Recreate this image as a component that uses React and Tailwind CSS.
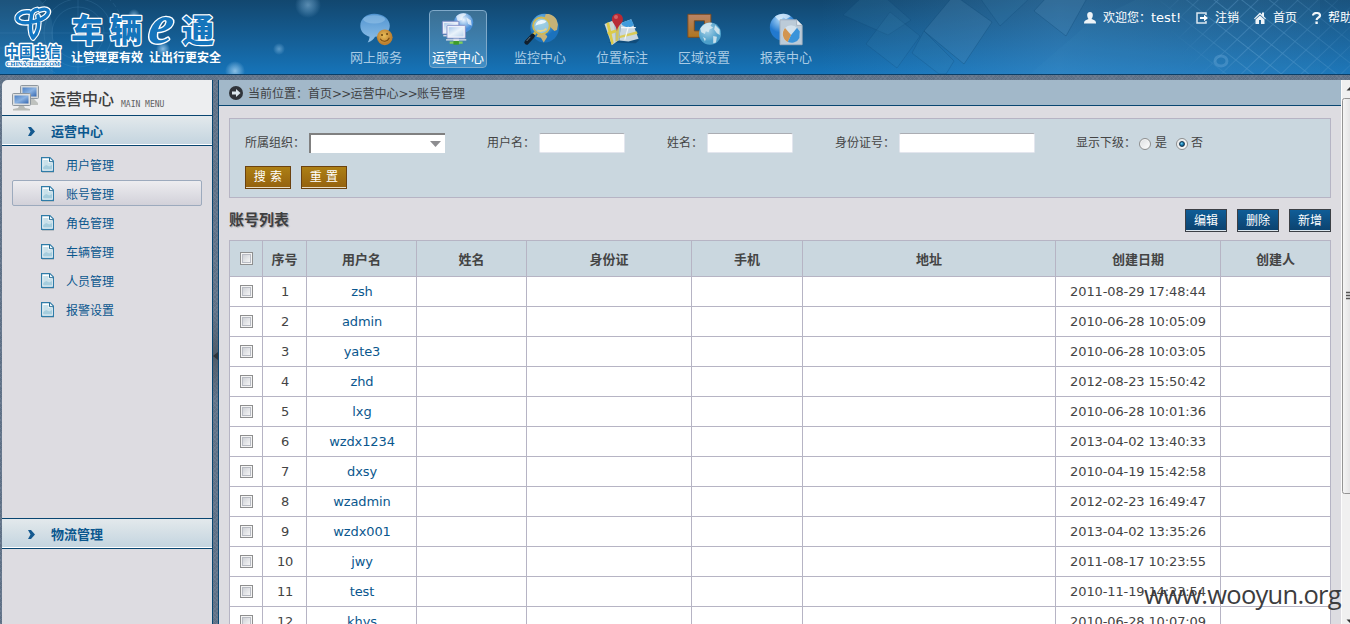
import React from "react";

const users = [
  ["zsh", "2011-08-29 17:48:44"],
  ["admin", "2010-06-28 10:05:09"],
  ["yate3", "2010-06-28 10:03:05"],
  ["zhd", "2012-08-23 15:50:42"],
  ["lxg", "2010-06-28 10:01:36"],
  ["wzdx1234", "2013-04-02 13:40:33"],
  ["dxsy", "2010-04-19 15:42:58"],
  ["wzadmin", "2012-02-23 16:49:47"],
  ["wzdx001", "2013-04-02 13:35:26"],
  ["jwy", "2011-08-17 10:23:55"],
  ["test", "2010-11-19 14:23:54"],
  ["khys", "2010-06-28 10:07:09"],
];

const GRID = "grid grid-cols-[33px_44px_110px_110px_165px_111px_253px_165px_110px]";
const TEXTURE =
  "bg-[#5e7085] bg-[repeating-linear-gradient(45deg,#76859a66_0_1px,transparent_1px_3px),repeating-linear-gradient(-45deg,#76859a66_0_1px,transparent_1px_3px)]";

function ChatIcon() {
  return (
    <svg width="38" height="38" viewBox="0 0 38 38">
      <defs>
        <linearGradient id="chat" x1="0" y1="0" x2="0" y2="1">
          <stop offset="0" stopColor="#4f93d0" />
          <stop offset="1" stopColor="#8fc0e8" />
        </linearGradient>
        <radialGradient id="smile" cx=".45" cy=".4">
          <stop offset="0" stopColor="#e8bd58" />
          <stop offset="1" stopColor="#bd8030" />
        </radialGradient>
      </defs>
      <path d="M17 2C8 2 2 7.500 2 15c0 6 4 10 10 12-.3 3-1 4.500-2 6 4-1 6-3 8-6 9-.5 16-5 16-12S27 2 17 2z" fill="url(#chat)" />
      <ellipse cx="17" cy="8" rx="12" ry="4.500" fill="#b8daf4" opacity=".35" />
      <circle cx="28.500" cy="27.500" r="8.500" fill="url(#smile)" />
      <circle cx="25.500" cy="25" r="1.100" fill="#6a4410" />
      <circle cx="31" cy="24" r="1.100" fill="#6a4410" />
      <path d="M23.500 29c2.500 4 8 3.500 10-1" stroke="#7b4c11" strokeWidth="1.200" fill="none" />
    </svg>
  );
}

function OperateIcon() {
  return (
    <svg width="38" height="38" viewBox="0 0 38 38">
      <defs>
        <linearGradient id="scr" x1="0" y1="0" x2="1" y2="1">
          <stop offset="0" stopColor="#a9c8ea" />
          <stop offset=".5" stopColor="#eaf3fb" />
          <stop offset="1" stopColor="#b8d2ec" />
        </linearGradient>
        <radialGradient id="gl1" cx=".5" cy=".35">
          <stop offset="0" stopColor="#eaf5ff" />
          <stop offset="1" stopColor="#4a8fd8" />
        </radialGradient>
      </defs>
      <circle cx="25" cy="11.500" r="10.500" fill="url(#gl1)" />
      <path d="M17 5c3-4 9-4 11-3-1 3-4 2-4 5s-4 1-5 4M28 6l5 3 1 6-4-2z" fill="#fff" opacity=".65" />
      <rect x="2" y="10" width="18" height="14" rx="1" fill="#e9edf8" stroke="#7383c0" />
      <rect x="4" y="12" width="14" height="10" fill="url(#scr)" />
      <path d="M3 25h5v1.500H3z" fill="#cfd6e6" />
      <rect x="7" y="14.500" width="20" height="14" rx="1" fill="#eef1fa" stroke="#8290c8" />
      <rect x="9" y="16.500" width="16" height="10" fill="url(#scr)" />
      <path d="M14 29h6v3h-6z" fill="#dfe4ee" />
      <path d="M6 29.500h22V31H6z" fill="#d6dcea" />
      <path d="M10 32h14v2.500H10z" fill="#7fd05a" />
      <path d="M14 31.500h6v4h-6z" fill="#3f9c2c" />
    </svg>
  );
}

function MonitorIcon() {
  return (
    <svg width="38" height="38" viewBox="0 0 38 38">
      <defs>
        <radialGradient id="gl2" cx=".4" cy=".3">
          <stop offset="0" stopColor="#8ccaf3" />
          <stop offset="1" stopColor="#1b72bd" />
        </radialGradient>
      </defs>
      <circle cx="24" cy="17.500" r="15.500" fill="url(#gl2)" />
      <path d="M25 2.500c5-1 10 2 12 6l1.500 5-1 6-3 1-4-4-3-5-4-3zM17 23c5-1 9 1 10 4l-4 6-3-5-5-1z" fill="#c6b277" />
      <circle cx="20.500" cy="15" r="9" fill="#a5d2e2" fillOpacity=".8" stroke="#d2b951" strokeWidth="2" />
      <path d="M14 15c1-6 7-8 12-5-3 4-7 2-12 5z" fill="#f4fbff" opacity=".9" />
      <path d="M16 20c3 1 7 1 10-2" stroke="#e8d48a" strokeWidth="2" fill="none" />
      <path d="M14 22.500l-4 4" stroke="#d8bb48" strokeWidth="3" />
      <path d="M11 26l-6.500 7" stroke="#111f2c" strokeWidth="5" strokeLinecap="round" />
      <path d="M8.500 27l-4 4.500" stroke="#69808e" strokeWidth="1" />
    </svg>
  );
}

function MapIcon() {
  return (
    <svg width="40" height="38" viewBox="0 0 40 38">
      <path d="M5 33l30 1 4-4-20-3z" fill="#0a3558" opacity=".45" />
      <path d="M1 13l10-4 5 22-7 5z" fill="#cdd6d3" />
      <path d="M11 9l8 4-2 18-4 1z" fill="#a9bfce" />
      <path d="M19 12l11-4 8 21-11 3-10-1z" fill="#cbd8e0" />
      <path d="M19 12l11-4 3 6c-5 4-10 2-13 0z" fill="#3f9bdc" />
      <path d="M6 11l5 23-2.500 1.500L3 12z" fill="#dccb49" />
      <path d="M4 22l9-3 1 3-9 3z" fill="#dccb49" />
      <path d="M14 14h3l-1 17-3 1z" fill="#d2c254" opacity=".9" />
      <path d="M17 26l19-5 1 2.500-20 5z" fill="#dccb49" opacity=".9" />
      <path d="M19 17l16 0M23 30l4-14" stroke="#f4f8fa" strokeWidth="1.200" />
      <path d="M15 1.500a6 6 0 0 0-6 6.500c0 4 5 6.500 5.500 13 .7-6.500 7-9 6.500-13a6 6 0 0 0-6-6.500z" fill="#b82a35" />
      <circle cx="13.500" cy="5.500" r="2.200" fill="#e0797a" opacity=".7" />
    </svg>
  );
}

function AreaIcon() {
  return (
    <svg width="40" height="38" viewBox="0 0 40 38">
      <defs>
        <linearGradient id="frame" x1="0" y1="0" x2="0" y2="1">
          <stop offset="0" stopColor="#b98467" />
          <stop offset="1" stopColor="#b0761f" />
        </linearGradient>
        <radialGradient id="gl3" cx=".4" cy=".35">
          <stop offset="0" stopColor="#a9d3e8" />
          <stop offset="1" stopColor="#4d9fca" />
        </radialGradient>
      </defs>
      <path d="M2.500 2.500h25v25h-25zM9.500 9.500v11h11v-11z" fillRule="evenodd" fill="url(#frame)" stroke="#7c4a1d" />
      <circle cx="26.500" cy="23.500" r="12" fill="url(#gl3)" />
      <path d="M16 18c3-5 8-7 13-6l-2 3 3 2-4 2-1 3-3-1-1 3-4-2zM30 26l4 1-1 6-3 1zM19 27l3 2-1 3zM32 14l5 5 0 6-3-2-3-4z" fill="#dcebf1" opacity=".85" />
    </svg>
  );
}

function ReportIcon() {
  return (
    <svg width="40" height="38" viewBox="0 0 40 38">
      <defs>
        <radialGradient id="gl4" cx=".4" cy=".2">
          <stop offset="0" stopColor="#b3dcfb" />
          <stop offset="1" stopColor="#2279cf" />
        </radialGradient>
      </defs>
      <circle cx="17" cy="16.500" r="14.500" fill="url(#gl4)" />
      <path d="M8 5c6-4 13-4 17 0l-5 3-3-2-4 4-3-3z" fill="#e0f0fc" opacity=".7" />
      <path d="M13.500 8.500h18l6 6v21h-24z" fill="#bccbd8" stroke="#a3b1bf" />
      <path d="M31.500 8.500v6h6" fill="#e6edf2" stroke="#a3b1bf" />
      <circle cx="25.500" cy="24" r="9.500" fill="#d3e1ec" />
      <path d="M25.500 25l-6.500-7.500a9.500 9.500 0 0 0 3 15z" fill="#d29550" />
      <path d="M25.500 25l-3.500 7.600a9.500 9.500 0 0 0 12.500-4.500l.5-7L32 17z" fill="#3b94da" />
    </svg>
  );
}

const modules = [
  ["网上服务", ChatIcon],
  ["运营中心", OperateIcon],
  ["监控中心", MonitorIcon],
  ["位置标注", MapIcon],
  ["区域设置", AreaIcon],
  ["报表中心", ReportIcon],
];

function HeaderArt() {
  return (
    <svg className="absolute inset-0" width="1350" height="74" viewBox="0 0 1350 74">
      <defs>
        <linearGradient id="sheen" x1="0" x2="1" y1="0" y2="0">
          <stop offset="0" stopColor="#4f9bd4" stopOpacity="0" />
          <stop offset=".45" stopColor="#58a0d8" stopOpacity=".33" />
          <stop offset="1" stopColor="#3a83bb" stopOpacity=".2" />
        </linearGradient>
        <radialGradient id="dot">
          <stop offset="0" stopColor="#9fcdee" stopOpacity=".85" />
          <stop offset=".5" stopColor="#8cc0e6" stopOpacity=".5" />
          <stop offset="1" stopColor="#8cc0e6" stopOpacity="0" />
        </radialGradient>
        <pattern id="mesh" width="14" height="17" patternUnits="userSpaceOnUse" patternTransform="rotate(38) skewX(-8)">
          <path d="M0 0h14M0 0v17" stroke="#70acd8" strokeOpacity=".5" strokeWidth="1.300" />
        </pattern>
        <linearGradient id="fade" x1="0" x2="1" y1=".2" y2="0">
          <stop offset="0" stopColor="#000" />
          <stop offset=".35" stopColor="#fff" />
          <stop offset=".7" stopColor="#aaa" />
          <stop offset="1" stopColor="#333" />
        </linearGradient>
        <mask id="meshmask">
          <rect x="1160" width="190" height="74" fill="url(#fade)" />
        </mask>
      </defs>
      <rect x="820" width="530" height="74" fill="url(#sheen)" />
      <g fill="none" stroke="#6ba7d2" strokeOpacity=".16">
        <circle cx="78" cy="33" r="26" />
        <circle cx="78" cy="33" r="34" />
        <circle cx="78" cy="33" r="46" strokeDasharray="5 3" />
        <path d="M0 33h130M78 0v74M0 48h60" />
      </g>
      <path d="M0 0h40c8 8 13 18 13 32v42H0z" fill="#5b95bf" opacity=".17" />
      <g fill="#4384b1" fillOpacity=".14" stroke="#0c4672" strokeOpacity=".22">
        <path d="M843 15l30-28 38 33-23 15z" />
        <path d="M866 44l24-32 30 24-23 32z" />
        <path d="M912 53l12-22 30 30-8 13h-7z" />
        <path d="M980-2h50l-30 28z" />
      </g>
      <g fill="#5a92ba" fillOpacity=".2" stroke="#0c4672" strokeOpacity=".3">
        <path d="M924 31l30-36 38 27-28 42z" />
        <path d="M1034 11l12-13 40-3v5l-20 36z" />
      </g>
      <path d="M1135 0l-45 22-60 52h290V0z" fill="#65a8d9" opacity=".05" />
      <rect x="1160" width="190" height="74" fill="url(#mesh)" mask="url(#meshmask)" />
      <ellipse cx="1221" cy="61" rx="6" ry="5" fill="none" stroke="#69a8d6" strokeWidth="3" opacity=".4" />
      <circle cx="308" cy="5" r="13" fill="url(#dot)" opacity=".6" />
      <circle cx="279" cy="49" r="6" fill="url(#dot)" opacity=".6" />
      <circle cx="235" cy="71" r="10" fill="url(#dot)" />
      <circle cx="163" cy="49" r="7" fill="url(#dot)" />
      <circle cx="134" cy="15" r="6" fill="url(#dot)" opacity=".7" />
    </svg>
  );
}

function Brand() {
  const cjk = "'Noto Sans CJK SC', sans-serif";
  const ring = "M29 12C20 11 15 17 18 20.500C22 25 38 22 45 17C52 11 47 7.500 40 10";
  const stem = "M37 9.500C34 10 32 12 31.500 15C30.500 24 29 32 33 38C38 33 40 26 38 16";
  return (
    <svg className="relative shrink-0" width="240" height="74" viewBox="0 0 240 74">
      <g fill="none" strokeLinecap="round" strokeLinejoin="round">
        <path d={ring + stem} stroke="#fff" strokeWidth="5.800" />
        <path d={ring + stem} stroke="#1276c2" strokeWidth="3.400" />
      </g>
      <g fill="#1474bb" stroke="#fff" paintOrder="stroke" strokeLinejoin="round">
        <text x="5" y="56.500" fontSize="15" fontWeight="700" fontFamily={cjk} strokeWidth="3" textLength="56" lengthAdjust="spacingAndGlyphs">中国电信</text>
        <text x="6" y="65.500" fontSize="7" fontWeight="700" fontFamily="'Liberation Serif', serif" strokeWidth="2.400" textLength="54" lengthAdjust="spacingAndGlyphs">CHINA TELECOM</text>
        <g fontSize="32" fontWeight="900" fontFamily={cjk} strokeWidth="2.600">
          <text x="71" y="42">车</text>
          <text x="110" y="42">辆</text>
          <text x="182" y="42">通</text>
        </g>
        <text transform="translate(147 43) skewX(-8)" fontSize="55" fontWeight="700" fontFamily="'Liberation Serif', serif" fontStyle="italic" strokeWidth="2.800">e</text>
      </g>
      <g fill="#fff" fontSize="12" fontWeight="700" fontFamily={cjk}>
        <text x="71" y="62" textLength="72">让管理更有效</text>
        <text x="149" y="62" textLength="72">让出行更安全</text>
      </g>
    </svg>
  );
}

function PageIcon() {
  return (
    <svg width="13" height="16" viewBox="0 0 13 16">
      <path d="M.6.600h8.300l3.500 3.500v10.300H.6z" fill="#fff" stroke="#2f7ca8" strokeWidth="1.200" />
      <path d="M2.200 3h5.300v3h3.500v6.500H2.200z" fill="#c9e1ea" />
      <path d="M2.200 10l3-2 3 1.500 2.800-1.500v4.500H2.200z" fill="#a5cddd" />
      <path d="M8.500 1v3.700h3.700" fill="#eef8fb" stroke="#276b92" />
      <path d="M1 15.500h12" stroke="#aeb6bd" strokeWidth=".8" />
    </svg>
  );
}

function Section({ label }) {
  return (
    <div className="flex h-[31px] shrink-0 items-center border-y border-[#094671] bg-gradient-to-b from-[#e3e9ec] to-[#c3d4df] shadow-[inset_0_-1px_0_#fff]">
      <svg className="mt-[2px] ml-[26px]" width="7" height="9" viewBox="0 0 7 9">
        <path d="M0 0h3l4 4.500L3 9H0l2.500-4.500z" fill="#14598f" />
      </svg>
      <span className="ml-[16px] pt-[3px] text-[13px] leading-[18px] font-bold text-[#0a578e]">{label}</span>
    </div>
  );
}

function Sidebar() {
  const items = ["用户管理", "账号管理", "角色管理", "车辆管理", "人员管理", "报警设置"];
  return (
    <aside className="ml-[2px] flex w-[211px] shrink-0 flex-col rounded-tl-md border-r border-[#094671] bg-[#dddce1]">
      <div className="flex h-[35px] shrink-0 items-center rounded-tl-md bg-[#edeef0]">
        <svg className="ml-[9px]" width="29" height="26" viewBox="0 0 29 26">
          <defs>
            <linearGradient id="pc" x1="0" y1="0" x2="1" y2="1">
              <stop offset="0" stopColor="#4d80c4" />
              <stop offset=".5" stopColor="#8ab2e2" />
              <stop offset="1" stopColor="#3567b0" />
            </linearGradient>
          </defs>
          <rect x="9.500" y=".5" width="18" height="13" rx="1" fill="#d5d7d8" stroke="#8e979f" />
          <rect x="11.500" y="2.500" width="14" height="9" fill="url(#pc)" />
          <path d="M18 14h5l4 4v2H17z" fill="#bfc2bf" />
          <rect x="1.500" y="8.500" width="18" height="12" rx="1" fill="#dedfdf" stroke="#8e979f" />
          <rect x="3.500" y="10.500" width="14" height="8" fill="url(#pc)" />
          <path d="M8 21h5l1 2 5 1v1.500H2V24l5-1z" fill="#b7bab6" />
        </svg>
        <span className="ml-[10px] pt-[5px] text-[16px] leading-[22px] font-medium text-[#3f3f40]">运营中心</span>
        <span className="ml-[7px] pt-[13px] font-['DejaVu_Sans_Mono',monospace] text-[8px] leading-[9px] text-[#5f5f62]">MAIN MENU</span>
      </div>
      <Section label="运营中心" />
      <nav className="flex h-[372px] shrink-0 flex-col gap-[3px] px-[10px] pt-[5px] text-[12px] text-[#0a578e]">
        {items.map((label, i) => (
          <a
            key={label}
            className={
              i === 1
                ? "flex h-[26px] items-center gap-[12px] rounded-[2px] border border-[#9caabd] bg-gradient-to-b from-[#ededf0] to-[#d2d1d9] pl-[28px]"
                : "flex h-[26px] items-center gap-[12px] border border-transparent pl-[28px]"
            }
          >
            <span className="pt-[2px]"><PageIcon /></span>
            <span className="pt-[4px] leading-[16px]">{label}</span>
          </a>
        ))}
      </nav>
      <Section label="物流管理" />
    </aside>
  );
}

function TextField({ label, className, width }) {
  return (
    <label className={"flex items-center gap-[4px] " + className}>
      <span>{label}</span>
      <span className={"block h-[20px] rounded-[2px] border border-[#e3e6ee] border-t-[#abadb3] bg-white " + width} />
    </label>
  );
}

function Check() {
  return (
    <span className="block h-[13px] w-[13px] border border-[#8e8f8f] bg-[#f4f4f4] p-[1px]">
      <span className="block h-[9px] w-[9px] border border-[#b9bcc4] bg-gradient-to-br from-[#cfd2d7] to-[#f6f6f6]" />
    </span>
  );
}

function Radio({ checked }) {
  return (
    <span className="flex h-[12px] w-[12px] items-center justify-center rounded-full border border-[#8e8f8f] bg-gradient-to-br from-[#dcdee0] to-white shadow-[inset_0_0_0_1px_#f4f4f4]">
      {checked && <span className="block h-[6px] w-[6px] rounded-full border border-[#12354e] bg-[radial-gradient(circle_at_40%_35%,#6fd0f0,#1478ad_50%,#0b405f)]" />}
    </span>
  );
}

function Cell({ children, className = "" }) {
  return <div className={"flex items-center justify-center border-r border-[#b6b4c4] " + className}>{children}</div>;
}

function Content() {
  const actions = ["编辑", "删除", "新增"];
  const heads = ["序号", "用户名", "姓名", "身份证", "手机", "地址", "创建日期", "创建人"];
  return (
    <main className="flex min-w-0 flex-1 flex-col overflow-hidden border-l border-[#094671] bg-[#dddce1]">
      <div className="flex h-[26px] shrink-0 items-center border-b border-[#094671] bg-[#a2b8c9] pl-[10px] text-[12px] text-[#3f4245]">
        <svg width="14" height="14" viewBox="0 0 14 14">
          <circle cx="7" cy="7" r="7" fill="#30343a" />
          <path d="M3 5.500h4V3l4.500 4L7 11V8.500H3z" fill="#dde7ee" />
        </svg>
        <span className="ml-[5px] pt-[2px] whitespace-nowrap">
          当前位置：首页<span className="tracking-[-0.800px]">&gt;&gt;</span>运营中心<span className="tracking-[-0.800px]">&gt;&gt;</span>账号管理
        </span>
      </div>
      <div className="flex min-h-0 flex-1 flex-col pt-[12px] pl-[10px]">
        <form className="h-[80px] w-[1102px] shrink-0 border border-[#b6b4c4] bg-[#cad7df] pt-[14px] pl-[15px] text-[12px] text-[#444]">
          <div className="flex h-[20px] items-center whitespace-nowrap">
            <label className="flex w-[200px] items-center gap-[4px]">
              <span>所属组织：</span>
              <span className="flex h-[20px] w-[136px] items-center justify-end border-t-2 border-l-2 border-[#808080] bg-white pr-[4px]">
                <svg width="11" height="6" viewBox="0 0 11 6">
                  <path d="M0 0h11L5.500 6z" fill="#8d8d90" />
                </svg>
              </span>
            </label>
            <TextField label="用户名：" className="ml-[42px]" width="w-[86px]" />
            <TextField label="姓名：" className="ml-[42px]" width="w-[86px]" />
            <TextField label="身份证号：" className="ml-[42px]" width="w-[136px]" />
            <span className="ml-[41px]">显示下级：</span>
            <label className="ml-[3px] flex items-center gap-[4px]">
              <span className="pt-[2px]"><Radio /></span>
              <span>是</span>
            </label>
            <label className="ml-[9px] flex items-center gap-[3px]">
              <span className="pt-[2px]"><Radio checked /></span>
              <span>否</span>
            </label>
          </div>
          <div className="mt-[13px] flex gap-[10px] text-white">
            {["搜 索", "重 置"].map((t) => (
              <span key={t} className="flex h-[23px] w-[46px] items-center justify-center border border-[#6b4210] bg-gradient-to-b from-[#ad8014] to-[#94610f] pb-[1px] text-[12px] tracking-[0.200px] shadow-[inset_0_-1px_0_#e8dcc4]">
                {t}
              </span>
            ))}
          </div>
        </form>
        <div className="flex h-[42px] w-[1102px] shrink-0 items-center justify-between">
          <h2 className="pt-[2px] text-[15px] leading-[20px] font-bold text-[#3f3f41] [text-shadow:1px_1px_1px_#a5a5aa]">账号列表</h2>
          <div className="flex gap-[10px] pt-[3px]">
            {actions.map((t) => (
              <span key={t} className="flex h-[23px] w-[42px] items-center justify-center border border-[#3c3f45] bg-gradient-to-b from-[#0f5d97] to-[#0c426e] text-[12px] text-white shadow-[inset_0_-1px_0_#dce6ee]">
                {t}
              </span>
            ))}
          </div>
        </div>
        <div className="w-[1102px] shrink-0 border-t border-l border-[#b6b4c4] text-[13px] text-[#444]">
          <div className={GRID + " h-[36px] border-b border-[#b6b4c4] bg-[#cad7df] font-bold"}>
            <Cell><Check /></Cell>
            {heads.map((h) => (
              <Cell key={h} className="pt-[2px]">{h}</Cell>
            ))}
          </div>
          {users.map(([name, date], i) => (
            <div key={name} className={GRID + " h-[30px] border-b border-[#b6b4c4] bg-white"}>
              <Cell><Check /></Cell>
              <Cell className="pl-[1px] tracking-[-0.200px]">{i + 1}</Cell>
              <Cell className="pl-[1px] tracking-[-0.100px] text-[#0a578e]">{name}</Cell>
              <Cell />
              <Cell />
              <Cell />
              <Cell />
              <Cell className="tracking-[-0.120px]">{date}</Cell>
              <Cell />
            </div>
          ))}
        </div>
      </div>
    </main>
  );
}

function Scrollbar() {
  return (
    <svg className="shrink-0" width="9" height="544" viewBox="0 0 9 544">
      <defs>
        <linearGradient id="thumb" x1="0" x2="1" y1="0" y2="0">
          <stop offset="0" stopColor="#f6f6f6" />
          <stop offset="1" stopColor="#d6d6d8" />
        </linearGradient>
      </defs>
      <rect width="9" height="544" fill="#f0f0f0" />
      <rect width="1" height="544" fill="#fcfcfc" />
      <path d="M5.500 10.500L9 7v3.500z" fill="#333" />
      <rect x="1.500" y="18.500" width="14" height="395" rx="2" fill="url(#thumb)" stroke="#949494" />
      <path d="M5 212.500h4M5 215.500h4M5 218.500h4" stroke="#555" strokeWidth="1.500" />
      <path d="M5.500 539.500H9v3.500z" fill="#333" />
    </svg>
  );
}

export default function App() {
  return (
    <div className="relative flex h-[624px] w-[1350px] flex-col overflow-hidden font-['DejaVu_Sans','Noto_Sans_CJK_SC',sans-serif]">
      <header className="relative flex h-[75px] shrink-0 overflow-hidden border-b border-[#0a3e68] bg-gradient-to-b from-[#12476f] to-[#1674b9]">
        <HeaderArt />
        <Brand />
        <nav className="relative ml-[107px] flex h-[68px] gap-[24px] pt-[10px]">
          {modules.map(([label, Icon], i) => (
            <a
              key={label}
              className={
                i === 1
                  ? "flex h-[58px] w-[58px] shrink-0 flex-col items-center rounded-[4px] border border-[#7fa9c9] bg-gradient-to-b from-[#3b6f93] to-[#3f8ec6] pt-[1px] text-white"
                  : "flex h-[58px] w-[58px] shrink-0 flex-col items-center border border-transparent pt-[1px] text-[#a9cbe5]"
              }
            >
              <Icon />
              <span className="pt-[2px] text-[13px] leading-[18px] whitespace-nowrap">{label}</span>
            </a>
          ))}
        </nav>
        <div className="relative ml-auto flex h-[36px] w-[266px] shrink-0 items-center text-[12px] whitespace-nowrap text-white">
          <svg className="shrink-0" width="12" height="12" viewBox="0 0 12 12">
            <path d="M6 0C4 0 3 1.400 3.200 3.500 3.400 5.500 4 6.500 4.600 7 2 8 0 8.400 0 11v.5h12V11C12 8.400 10 8 7.400 7 8 6.500 8.600 5.500 8.800 3.500 9 1.400 8 0 6 0z" fill="#eef4f8" />
          </svg>
          <span className="ml-[7px] w-[93px] shrink-0">欢迎您：<span className="text-[13px]">test!</span></span>
          <svg className="shrink-0" width="12" height="12" viewBox="0 0 12 12">
            <path d="M10 3V1H1v10h9V9" fill="none" stroke="#dbe8f1" strokeWidth="1.500" />
            <path d="M4 5h4V2.700L12 6 8 9.300V7H4z" fill="#fff" />
          </svg>
          <span className="ml-[7px] w-[39px] shrink-0">注销</span>
          <svg className="shrink-0" width="12" height="12" viewBox="0 0 12 12">
            <path d="M0 6.500L6 .5l2 2V.5h2v4l2 2-.8.8L6 2.500.8 7.300z" fill="#eef4f8" />
            <path d="M1.500 7.500L6 3.600l4.500 3.900V12H7V8H5v4H1.500z" fill="#eef4f8" />
          </svg>
          <span className="ml-[7px] w-[39px] shrink-0">首页</span>
          <svg className="shrink-0" width="9" height="12" viewBox="0 0 9 12">
            <path d="M1 3.500C1 0 8 .3 8 3.400 8 5.800 4.600 5.500 4.600 8" fill="none" stroke="#f2f7fa" strokeWidth="2.200" />
            <path d="M3.400 9.500h2.400V12H3.400z" fill="#f2f7fa" />
          </svg>
          <span className="ml-[7px] shrink-0">帮助</span>
        </div>
      </header>
      <div className={"flex min-h-0 flex-1 pt-[5px] " + TEXTURE}>
        <Sidebar />
        <div className="flex w-[5px] shrink-0 items-center">
          <div className="mb-[-7px] flex h-[86px] w-[5px] items-center bg-gradient-to-b from-transparent via-[#4f5b68] to-transparent">
            <svg width="5" height="8" viewBox="0 0 5 8">
              <path d="M5 0L0 4l5 4z" fill="#2f343a" />
            </svg>
          </div>
        </div>
        <Content />
        <Scrollbar />
      </div>
      <div className="absolute top-[576px] left-[1144px] font-['Open_Sans',sans-serif] text-[25.500px] leading-[36px] tracking-[-0.700px] whitespace-nowrap text-[#3c3c3e]">
        www.wooyun.org
      </div>
    </div>
  );
}
